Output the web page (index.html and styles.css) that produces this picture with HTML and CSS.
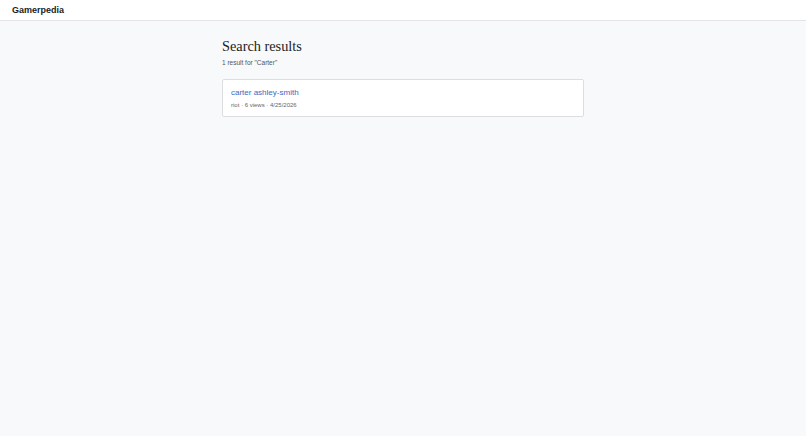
FILE: index.html
```html
<!DOCTYPE html>
<html lang="en">
  <head>
    <meta charset="UTF-8" />
    <title>Search results - Gamerpedia</title>
    <link rel="stylesheet" href="styles.css">
  </head>
  <body>
    <header class="topbar">
      <a class="logo" href="#">Gamerpedia</a>
    </header>

    <main class="page">
      <h1>Search results</h1>
      <p class="summary">1 result for "Carter"</p>

      <div class="results">
        <div class="result">
          <a class="result-title" href="#">carter ashley-smith</a>
          <div class="result-meta">riot · 6 views · 4/25/2026</div>
        </div>
      </div>
    </main>
  </body>
</html>
```

FILE: styles.css
```css
body {
  font-family: "Liberation Sans", Arial, sans-serif;
  background: #f8f9fa;
  color: #222;
  margin: 0;
}

.topbar {
  background: #fff;
  border-bottom: 1px solid #e2e4e7;
  height: 20px;
  display: flex;
  align-items: center;
  padding: 0 12px;
}

.logo {
  font-size: 9px;
  font-weight: bold;
  color: #222;
  text-decoration: none;
}

.page {
  width: 362px;
  margin: 0 auto;
  padding-top: 16px;
}

h1 {
  font-family: "Liberation Serif", Georgia, serif;
  font-weight: normal;
  font-size: 14.3px;
  color: #222;
  margin: 0;
  line-height: 18px;
}

.summary {
  font-size: 6.5px;
  color: #555;
  margin: 3px 0 0;
  line-height: 9px;
}

.results {
  margin-top: 12px;
}

.result {
  background: #fff;
  border: 1px solid #dcdee2;
  border-radius: 2px;
  padding: 7px 8px 6px 8px;
}

.result-title {
  display: block;
  font-size: 8px;
  color: #3b68c6;
  text-decoration: none;
  line-height: 11px;
}

.result-meta {
  font-size: 6px;
  color: #666;
  margin-top: 3px;
  line-height: 9px;
}
```
